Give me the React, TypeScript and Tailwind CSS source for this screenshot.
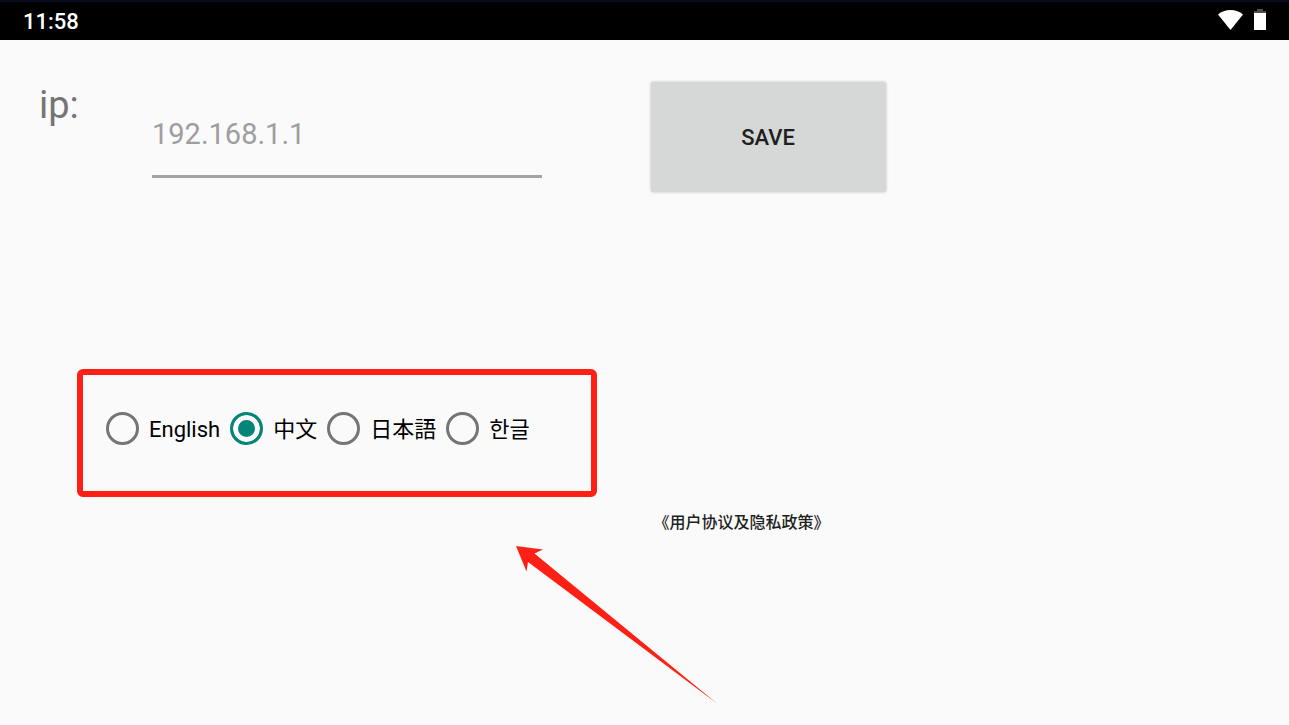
import { useState } from "react"

const languages = [
  { id: "en", label: "English", font: "font-['Roboto',sans-serif]" },
  { id: "zh", label: "中文", font: "font-['Roboto','Noto_Sans_CJK_SC',sans-serif]" },
  { id: "ja", label: "日本語", font: "font-['Roboto','Noto_Sans_CJK_JP',sans-serif]" },
  { id: "ko", label: "한글", font: "font-['Roboto','Noto_Sans_CJK_KR',sans-serif]" },
]

function StatusBar() {
  return (
    <header className="flex h-10 items-center justify-between border-t-2 border-[#090b20] bg-black px-[23px] pt-[2px] text-white">
      <span className="text-[22px] leading-[26px] font-medium">11:58</span>
      <div className="mt-[5px] flex items-end gap-[11px] self-start">
        <svg width="25" height="20" viewBox="0 0 25 20" fill="currentColor" aria-label="Wi-Fi">
          <path d="M12.5 20 0 4.4C3.3 1.7 7.6 0 12.5 0S21.7 1.7 25 4.4Z" />
        </svg>
        <svg width="12" height="21" viewBox="0 0 12 21" fill="currentColor" aria-label="Battery">
          <path d="M3 0h6v2h3v2H0V2h3Z" fill="#4d4d4d" />
          <path d="M0 4h12v17H0Z" />
        </svg>
      </div>
    </header>
  )
}

function LanguagePicker() {
  const [language, setLanguage] = useState("zh")

  return (
    <fieldset className="mr-12 ml-[77px] flex h-32 items-center gap-[10px] rounded-md border-6 border-[#ff2015] pb-[7px] pl-[23px]">
      {languages.map((item) => (
        <label
          key={item.id}
          lang={item.id}
          className={`flex items-start gap-[10px] text-[22px] leading-[35px] whitespace-nowrap text-black ${item.font}`}
        >
          <input
            type="radio"
            name="language"
            value={item.id}
            checked={language === item.id}
            onChange={() => setLanguage(item.id)}
            className="size-[33px] shrink-0 appearance-none rounded-full border-3 border-[#757575] checked:border-[#058577] checked:bg-[#058577] checked:shadow-[inset_0_0_0_5px_#fafafa]"
          />
          {item.label}
        </label>
      ))}
    </fieldset>
  )
}

export default function App() {
  const [ip, setIp] = useState("")

  return (
    <div className="min-h-screen bg-[#fafafa] font-['Roboto','Noto_Sans_CJK_SC',sans-serif]">
      <StatusBar />
      <main className="pt-[42px]">
        <form className="grid grid-cols-2 items-start" onSubmit={(e) => e.preventDefault()}>
          <div className="flex items-start pr-[103px] pl-[39px]">
            <label htmlFor="ip" className="w-[113px] shrink-0 text-[38px] leading-[46px] text-[#757575]">
              ip:
            </label>
            <input
              id="ip"
              type="text"
              value={ip}
              onChange={(e) => setIp(e.target.value)}
              placeholder="192.168.1.1"
              className="mt-[11px] h-[85px] w-full min-w-0 border-b-3 border-[#a3a3a3] text-[29px] text-[#212121] outline-none placeholder:text-[#9e9e9e]"
            />
          </div>
          <div className="pl-[6px]">
            <button
              type="submit"
              className="h-[110px] w-[235px] rounded-xs bg-[#d6d8d7] text-[22px] font-medium text-[#1f1f1f] shadow-[0_0_3px_rgba(0,0,0,0.25)]"
            >
              SAVE
            </button>
          </div>
        </form>

        <div className="mt-[177px] grid grid-cols-2">
          <LanguagePicker />
        </div>

        <div className="grid grid-cols-2 items-start">
          {/* pointer to the language group */}
          <svg
            width="202"
            height="158"
            viewBox="0 0 202 158"
            className="mt-[49px] ml-[516px]"
            aria-hidden="true"
          >
            <path d="M0 0 27 3.5 18.5 7.5 201 157.5 12 16 10.5 25.5Z" fill="#ff2015" />
          </svg>
          <a href="#agreement" className="mt-[14px] pl-[9px] text-base font-medium text-[#1f1f1f]">
            《用户协议及隐私政策》
          </a>
        </div>
      </main>
    </div>
  )
}
